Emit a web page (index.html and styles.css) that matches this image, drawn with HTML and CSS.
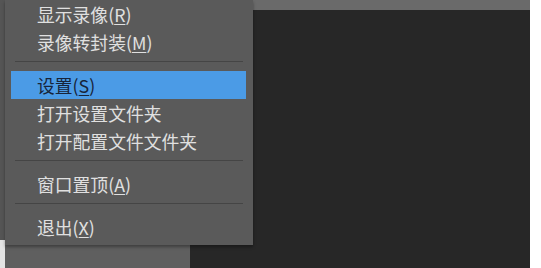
FILE: index.html
```html
<!DOCTYPE html>
<html lang="zh-CN">
<head>
    <meta charset="UTF-8">
    <meta name="viewport" content="width=device-width, initial-scale=1.0">
    <title>右键菜单</title>
    <link rel="stylesheet" href="styles.css">
</head>
<body>

<div class="ventana">
    <div class="lateral">
        <div class="borde"></div>
    </div>
    <div class="barra"></div>
    <div class="contenido"></div>

    <div class="menu">
        <div class="item">显示录像(<u>R</u>)</div>
        <div class="item">录像转封装(<u>M</u>)</div>
        <div class="separador"></div>
        <div class="item activo">设置(<u>S</u>)</div>
        <div class="item">打开设置文件夹</div>
        <div class="item">打开配置文件文件夹</div>
        <div class="separador"></div>
        <div class="item">窗口置顶(<u>A</u>)</div>
        <div class="separador"></div>
        <div class="item">退出(<u>X</u>)</div>
    </div>
</div>

</body>
</html>
```

FILE: styles.css
```css
body {
    margin: 0;
    background: #ffffff;
    font-family: "Noto Sans CJK SC", "Noto Sans", sans-serif;
}

.ventana {
    position: relative;
    width: 530px;
    height: 268px;
    display: grid;
    grid-template-columns: 190px 1fr;
    grid-template-rows: 10px 1fr;
    background: #272727;
}

.lateral {
    grid-row: 1 / 3;
    background: #5f5f5f;
    display: flex;
}

.borde {
    width: 5px;
    background: linear-gradient(#555555 0, #555555 240px, #e4e4e4 240px);
}

.barra {
    background: #6a6a6a;
}

.contenido {
    background: #272727;
}

.menu {
    position: absolute;
    left: 5px;
    top: 0;
    width: 248px;
    padding: 0 0 4px 0;
    background: #5a5a5a;
    box-shadow: 0 2px 3px rgba(0, 0, 0, 0.35);
}

.item {
    height: 28px;
    line-height: 29px;
    margin: 0 7px 0 6px;
    padding-left: 26px;
    font-size: 17.8px;
    color: #e0e0e0;
    white-space: nowrap;
}

.item u {
    text-underline-offset: 2px;
}

.activo {
    background: #4b9be6;
    color: #17243a;
}

.separador {
    height: 1px;
    margin: 5px 10px 9px 10px;
    background: #454545;
}
```
